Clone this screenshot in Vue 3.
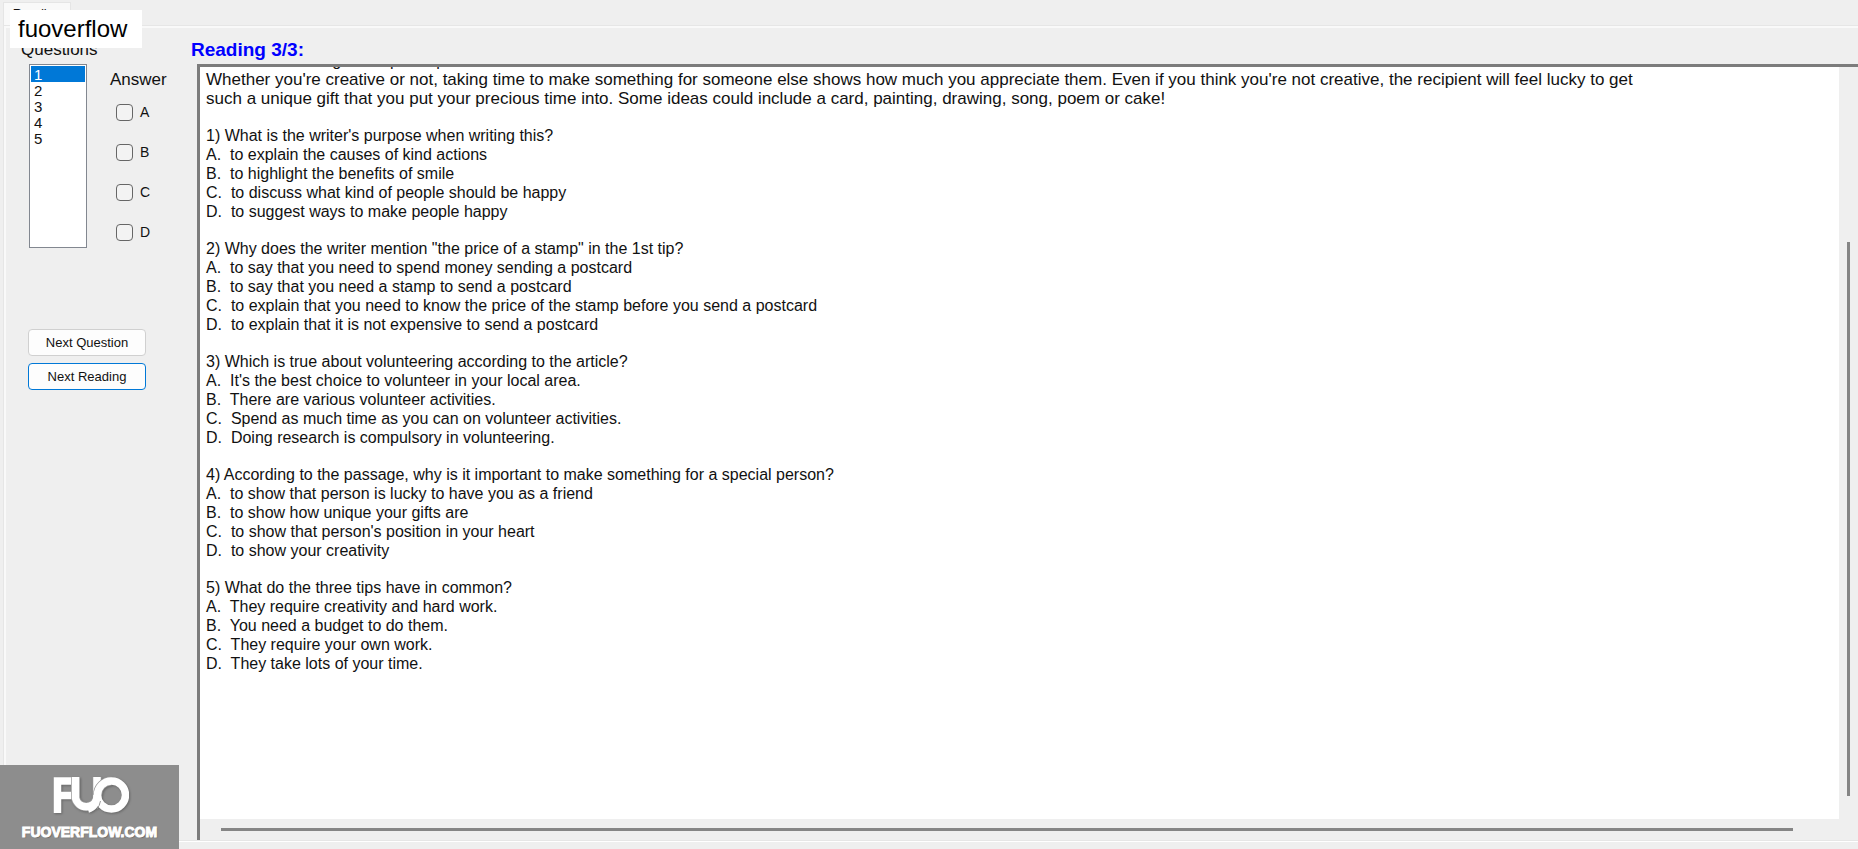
<script setup>
import { ref } from 'vue'

const current = ref('1')
const numbers = ['1', '2', '3', '4', '5']
const choices = ['A', 'B', 'C', 'D']
const picked = ref([])

const questions = [
  {
    title: "1) What is the writer's purpose when writing this?",
    options: [
      'A.  to explain the causes of kind actions',
      'B.  to highlight the benefits of smile',
      'C.  to discuss what kind of people should be happy',
      'D.  to suggest ways to make people happy'
    ]
  },
  {
    title: '2) Why does the writer mention "the price of a stamp" in the 1st tip?',
    options: [
      'A.  to say that you need to spend money sending a postcard',
      'B.  to say that you need a stamp to send a postcard',
      'C.  to explain that you need to know the price of the stamp before you send a postcard',
      'D.  to explain that it is not expensive to send a postcard'
    ]
  },
  {
    title: '3) Which is true about volunteering according to the article?',
    options: [
      "A.  It's the best choice to volunteer in your local area.",
      'B.  There are various volunteer activities.',
      'C.  Spend as much time as you can on volunteer activities.',
      'D.  Doing research is compulsory in volunteering.'
    ]
  },
  {
    title: '4) According to the passage, why is it important to make something for a special person?',
    options: [
      'A.  to show that person is lucky to have you as a friend',
      'B.  to show how unique your gifts are',
      "C.  to show that person's position in your heart",
      'D.  to show your creativity'
    ]
  },
  {
    title: '5) What do the three tips have in common?',
    options: [
      'A.  They require creativity and hard work.',
      'B.  You need a budget to do them.',
      'C.  They require your own work.',
      'D.  They take lots of your time.'
    ]
  }
]
</script>

<template>
  <main class="window">
    <div class="tabs"><button type="button" class="tab">Reading</button></div>

    <section class="page">
      <aside class="side">
        <label class="heading" for="questions">Questions</label>
        <div class="controls">
          <select id="questions" v-model="current" class="list" size="5">
            <option v-for="n in numbers" :key="n" :value="n">{{ n }}</option>
          </select>
          <fieldset class="answers">
            <legend>Answer</legend>
            <label v-for="c in choices" :key="c" class="choice">
              <input v-model="picked" type="checkbox" :value="c" />{{ c }}
            </label>
          </fieldset>
        </div>
        <div class="buttons">
          <button type="button" class="push">Next Question</button>
          <button type="button" class="push focus">Next Reading</button>
        </div>
      </aside>

      <div class="content">
        <h1 class="title">Reading 3/3:</h1>
        <div class="reader">
          <article class="text">
            <p class="clipped">3. Make something for a special person</p>
            <p class="passage">
              Whether you're creative or not, taking time to make something for someone else shows how much you appreciate them. Even if you think you're not creative, the recipient will feel lucky to get<br />such a unique gift that you put your precious time into. Some ideas could include a card, painting, drawing, song, poem or cake!
            </p>
            <div v-for="q in questions" :key="q.title" class="question">
              <p>{{ q.title }}</p>
              <p v-for="o in q.options" :key="o">{{ o }}</p>
            </div>
          </article>
          <div class="track vertical"><div class="thumb"></div></div>
          <div class="track horizontal"><div class="thumb"></div></div>
        </div>
      </div>
    </section>

    <div class="tag">fuoverflow</div>

    <div class="brand">
      <svg class="logo" width="78" height="38" viewBox="0 0 78 38" aria-hidden="true">
        <g fill="none" stroke="#fff" stroke-width="7.500">
          <path d="M6.500 37V5H21M6.500 19.500H21" />
          <path d="M24.500 1V22A11 11 0 0 0 46 22L46 1" stroke="#9a9a9a" stroke-width="9" />
          <path d="M24.500 1V22A11 11 0 0 0 46 22L46 1" />
          <path d="M46.500 19A14 14 0 0 1 60.500 5" stroke="#9a9a9a" stroke-width="9" />
          <circle cx="60.500" cy="19" r="14" />
          <path d="M37 33Q45 31 46.500 19" />
          <path d="M49.500 25Q48.500 30 46 33" stroke="#9a9a9a" stroke-width="1" />
        </g>
      </svg>
      <span class="site">FUOVERFLOW.COM</span>
    </div>
  </main>
</template>

<style>
html,
body,
#app {
  height: 100%;
}
body {
  margin: 0;
}
</style>

<style scoped>
* {
  box-sizing: border-box;
}
.window {
  position: relative;
  display: flex;
  flex-direction: column;
  height: 100%;
  padding: 2px 0 8px 3px;
  overflow: hidden;
  background: #efefef;
  color: #111;
  font-family: "Liberation Sans", Arial, sans-serif;
  font-size: 16px;
}
.tabs {
  height: 23px;
}
.tab {
  width: 68px;
  height: 23px;
  padding: 0;
  border: 1px solid #e5e5e5;
  border-bottom: 0;
  background: #f9f9f9;
  color: #111;
  font: 13px/16px "Liberation Sans", Arial, sans-serif;
}
.page {
  display: flex;
  flex: 1;
  min-height: 0;
  border: 1px solid #e6e6e6;
  border-right: 0;
  box-shadow: inset 2px 2px 0 #f9f9f9, 0 1px 0 #fff;
}
.side {
  display: flex;
  flex-direction: column;
  flex: none;
  width: 193px;
  padding: 14px 0 0 25px;
}
.heading {
  margin-left: -8px;
  font-size: 17px;
  line-height: 20px;
}
.controls {
  display: flex;
  margin-top: 4px;
}
.list {
  width: 58px;
  height: 184px;
  padding: 1px;
  overflow: hidden;
  border: 1px solid #828790;
  border-radius: 0;
  outline: 0;
  background: #fff;
  color: #111;
  font: 15px/16px "Liberation Sans", Arial, sans-serif;
}
.list option {
  height: 16px;
  min-height: 16px;
  padding: 0 3px;
  line-height: 16px;
}
.list option:checked {
  background: linear-gradient(#0078d7, #0078d7);
  color: #fff;
  -webkit-text-fill-color: #fff;
}
.answers {
  display: flex;
  flex-direction: column;
  gap: 20px;
  min-width: 0;
  margin: 0 0 0 23px;
  padding: 0;
  border: 0;
}
.answers legend {
  margin-bottom: 12px;
  padding: 6px 0 0;
  font-size: 17px;
  line-height: 20px;
}
.choice {
  display: flex;
  align-items: center;
  gap: 7px;
  height: 20px;
  margin-left: 6px;
  font-size: 14px;
}
.choice input {
  width: 17px;
  height: 17px;
  margin: 0;
  appearance: none;
  border: 1px solid #666;
  border-radius: 4px;
  background: #f3f3f3;
}
.choice input:checked {
  background: #0078d7;
}
.buttons {
  display: flex;
  flex-direction: column;
  gap: 7px;
  margin: 81px 0 0 -1px;
}
.push {
  width: 118px;
  height: 27px;
  padding: 0;
  border: 1px solid #d0d0d0;
  border-radius: 4px;
  background: #fdfdfd;
  color: #111;
  font: 13px/20px "Liberation Sans", Arial, sans-serif;
}
.push.focus {
  border-color: #0078d7;
}
.content {
  display: flex;
  flex: 1;
  flex-direction: column;
  min-width: 0;
}
.title {
  margin: 14px 0 4px -6px;
  color: #00f;
  font-size: 19px;
  font-weight: bold;
  line-height: 20px;
}
.reader {
  display: grid;
  flex: 1;
  grid-template: minmax(0, 1fr) 21px / minmax(0, 1fr) 19px;
  min-height: 0;
  border: solid #7c7c7c;
  border-width: 3px 0 0 3px;
}
.text {
  padding-left: 6px;
  overflow: hidden;
  background: #fff;
  line-height: 19px;
  white-space: pre-wrap;
}
.text p {
  margin: 0;
}
.text .clipped {
  margin-top: -16px;
}
.text .passage {
  font-size: 17px;
  white-space: normal;
}
.question {
  margin-top: 18px;
}
.track {
  display: flex;
}
.vertical {
  flex-direction: column;
  padding: 175px 8px 23px;
}
.horizontal {
  padding: 9px 46px 9px 21px;
}
.thumb {
  flex: 1;
  background: #858585;
}
.tag {
  position: absolute;
  top: 10px;
  left: 10px;
  padding: 4px 15px 4px 8px;
  background: #fff;
  color: #000;
  font-size: 24px;
  line-height: 30px;
}
.brand {
  position: absolute;
  bottom: 0;
  left: 0;
  display: flex;
  flex-direction: column;
  align-items: center;
  width: 179px;
  height: 84px;
  padding-top: 11px;
  background: #8d8d8d;
  color: #fff;
}
.logo {
  filter: drop-shadow(1px 1px 1px #666);
}
.site {
  margin-top: 8px;
  font-size: 14px;
  font-weight: bold;
  line-height: 20px;
  text-shadow: 1px 1px 1px #666;
  -webkit-text-stroke: 1px #fff;
}
</style>
